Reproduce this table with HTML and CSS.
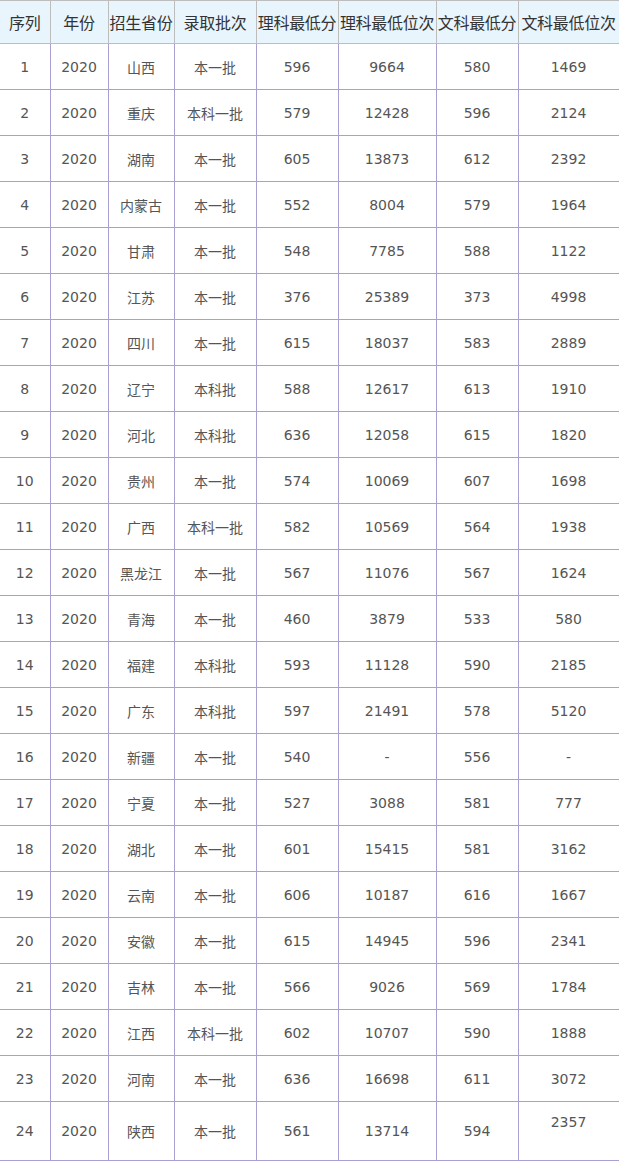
FILE: index.html
```html
<!DOCTYPE html>
<html lang="zh-CN">
<head>
<meta charset="utf-8">
<title>录取分数</title>
<link rel="stylesheet" href="styles.css">
</head>
<body>
<table class="scores">
  <colgroup>
    <col class="c1"><col class="c2"><col class="c3"><col class="c4">
    <col class="c5"><col class="c6"><col class="c7"><col class="c8">
  </colgroup>
  <thead>
    <tr><th>序列</th><th>年份</th><th>招生省份</th><th>录取批次</th><th>理科最低分</th><th>理科最低位次</th><th>文科最低分</th><th>文科最低位次</th></tr>
  </thead>
  <tbody>
    <tr><td>1</td><td>2020</td><td>山西</td><td>本一批</td><td>596</td><td>9664</td><td>580</td><td>1469</td></tr>
    <tr><td>2</td><td>2020</td><td>重庆</td><td>本科一批</td><td>579</td><td>12428</td><td>596</td><td>2124</td></tr>
    <tr><td>3</td><td>2020</td><td>湖南</td><td>本一批</td><td>605</td><td>13873</td><td>612</td><td>2392</td></tr>
    <tr><td>4</td><td>2020</td><td>内蒙古</td><td>本一批</td><td>552</td><td>8004</td><td>579</td><td>1964</td></tr>
    <tr><td>5</td><td>2020</td><td>甘肃</td><td>本一批</td><td>548</td><td>7785</td><td>588</td><td>1122</td></tr>
    <tr><td>6</td><td>2020</td><td>江苏</td><td>本一批</td><td>376</td><td>25389</td><td>373</td><td>4998</td></tr>
    <tr><td>7</td><td>2020</td><td>四川</td><td>本一批</td><td>615</td><td>18037</td><td>583</td><td>2889</td></tr>
    <tr><td>8</td><td>2020</td><td>辽宁</td><td>本科批</td><td>588</td><td>12617</td><td>613</td><td>1910</td></tr>
    <tr><td>9</td><td>2020</td><td>河北</td><td>本科批</td><td>636</td><td>12058</td><td>615</td><td>1820</td></tr>
    <tr><td>10</td><td>2020</td><td>贵州</td><td>本一批</td><td>574</td><td>10069</td><td>607</td><td>1698</td></tr>
    <tr><td>11</td><td>2020</td><td>广西</td><td>本科一批</td><td>582</td><td>10569</td><td>564</td><td>1938</td></tr>
    <tr><td>12</td><td>2020</td><td>黑龙江</td><td>本一批</td><td>567</td><td>11076</td><td>567</td><td>1624</td></tr>
    <tr><td>13</td><td>2020</td><td>青海</td><td>本一批</td><td>460</td><td>3879</td><td>533</td><td>580</td></tr>
    <tr><td>14</td><td>2020</td><td>福建</td><td>本科批</td><td>593</td><td>11128</td><td>590</td><td>2185</td></tr>
    <tr><td>15</td><td>2020</td><td>广东</td><td>本科批</td><td>597</td><td>21491</td><td>578</td><td>5120</td></tr>
    <tr><td>16</td><td>2020</td><td>新疆</td><td>本一批</td><td>540</td><td>-</td><td>556</td><td>-</td></tr>
    <tr><td>17</td><td>2020</td><td>宁夏</td><td>本一批</td><td>527</td><td>3088</td><td>581</td><td>777</td></tr>
    <tr><td>18</td><td>2020</td><td>湖北</td><td>本一批</td><td>601</td><td>15415</td><td>581</td><td>3162</td></tr>
    <tr><td>19</td><td>2020</td><td>云南</td><td>本一批</td><td>606</td><td>10187</td><td>616</td><td>1667</td></tr>
    <tr><td>20</td><td>2020</td><td>安徽</td><td>本一批</td><td>615</td><td>14945</td><td>596</td><td>2341</td></tr>
    <tr><td>21</td><td>2020</td><td>吉林</td><td>本一批</td><td>566</td><td>9026</td><td>569</td><td>1784</td></tr>
    <tr><td>22</td><td>2020</td><td>江西</td><td>本科一批</td><td>602</td><td>10707</td><td>590</td><td>1888</td></tr>
    <tr><td>23</td><td>2020</td><td>河南</td><td>本一批</td><td>636</td><td>16698</td><td>611</td><td>3072</td></tr>
    <tr class="tall"><td>24</td><td>2020</td><td>陕西</td><td>本一批</td><td>561</td><td>13714</td><td>594</td><td class="raised">2357</td></tr>
  </tbody>
</table>
</body>
</html>
```
FILE: styles.css
```css
html, body {
  margin: 0;
  padding: 0;
  background: #ffffff;
}

.scores {
  border-collapse: collapse;
  table-layout: fixed;
  width: 619px;
  font-family: "DejaVu Sans", "Noto Sans CJK SC", sans-serif;
}

.c1 { width: 50px; }
.c2 { width: 58px; }
.c3 { width: 66px; }
.c4 { width: 82px; }
.c5 { width: 82px; }
.c6 { width: 98px; }
.c7 { width: 82px; }
.c8 { width: 101px; }

.scores th {
  height: 42px;
  padding: 0;
  background: #e9f5fc;
  border: 1px solid #bdbdbd;
  color: #333333;
  font-family: "Noto Sans CJK SC", sans-serif;
  font-size: 16px;
  font-weight: normal;
  text-align: center;
  white-space: nowrap;
  overflow: hidden;
  letter-spacing: -0.3px;
}

.scores td {
  height: 45px;
  padding: 0;
  border: 1px solid #a99fd2;
  color: #555555;
  font-size: 14px;
  text-align: center;
  vertical-align: middle;
  white-space: nowrap;
}

.scores th:first-child,
.scores td:first-child {
  border-left: none;
}

.scores td:nth-child(3),
.scores td:nth-child(4) {
  font-family: "Noto Sans CJK SC", sans-serif;
}

.scores .tall td {
  height: 58px;
}

.scores .tall td.raised {
  height: 40px;
  padding-bottom: 18px;
}
```
